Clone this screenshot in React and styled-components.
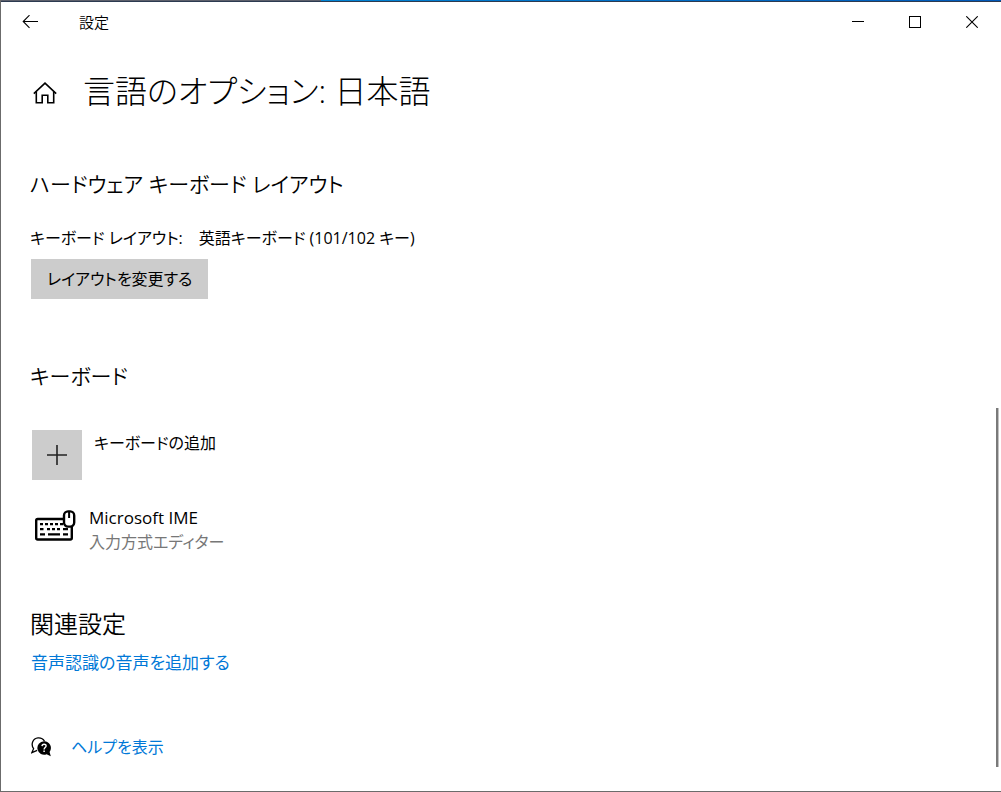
import React from 'react';
import styled, { createGlobalStyle } from 'styled-components';

const GlobalStyle = createGlobalStyle`
  *, *::before, *::after { box-sizing: border-box; }
  body {
    margin: 0;
    background: #fff;
    color: #000;
    font-family: "Open Sans", "Noto Sans CJK JP", sans-serif;
    font-size: 16px;
    line-height: 24px;
    font-feature-settings: "palt";
  }
  h1, h2, p { margin: 0; font-weight: 400; }
  button {
    border: 0;
    padding: 0;
    color: inherit;
    background: none;
    font: inherit;
    font-feature-settings: inherit;
  }
  svg { display: block; }
`;

const Frame = styled.div`
  display: flex;
  flex-direction: column;
  min-height: 100vh;
  border: solid #6b6b6b;
  border-width: 0 0 1px 1px;
`;

const Accent = styled.div`
  height: 2px;
  background: linear-gradient(90deg, #5c5f6b 0 32%, #0084d4 32%, #0058b8 100%);
  border-bottom: 1px solid #2c3a50;
`;

const TitleBar = styled.header`
  display: flex;
  align-items: center;
  height: 40px;
  padding-right: 1px;
`;

const BackButton = styled.button`
  display: grid;
  place-items: center;
  width: 58px;
  height: 40px;
`;

const AppName = styled.span`
  flex: 1;
  padding-left: 20px;
  font-size: 15px;
  font-weight: 350;
`;

const CaptionButton = styled.button`
  display: grid;
  place-items: center;
  width: 57px;
  height: 40px;
`;

const Body = styled.div`
  display: flex;
  flex: 1;
`;

const Content = styled.main`
  flex: 1;
  padding: 24px 29px 30px;
`;

const Track = styled.div`
  display: flex;
  align-items: flex-end;
  width: 5px;
  padding-bottom: 24px;
`;

const Thumb = styled.div`
  width: 3px;
  height: 49.5%;
  background: #7a7a7a;
  border-right: 1px solid #c2c2c2;
`;

const PageHeader = styled.div`
  display: flex;
  align-items: center;
  gap: 26px;
  height: 50px;
`;

const HomeButton = styled.button`
  padding: 4px 0 0 3px;
`;

const Title = styled.h1`
  font-size: 32px;
  line-height: 50px;
  font-weight: 300;
`;

const Section = styled.section`
  margin-top: ${(p) => p.$gap}px;
`;

const Heading = styled.h2`
  font-size: ${(p) => (p.$large ? 24 : 21)}px;
  line-height: 36px;
  font-weight: 350;
`;

const Detail = styled.p`
  display: flex;
  gap: 16px;
  margin-top: 24px;
`;

const FlatButton = styled.button`
  height: 40px;
  margin: 9px 0 0 1px;
  padding: 0 16px;
  background: #ccc;
`;

const AddButton = styled.button`
  display: flex;
  gap: 12px;
  margin: 36px 0 0 2px;
  text-align: left;
`;

const AddLabel = styled.span`
  padding-top: 1px;
`;

const Tile = styled.span`
  display: grid;
  place-items: center;
  width: 50px;
  height: 50px;
  background: #ccc;
`;

const Device = styled.div`
  display: flex;
  align-items: flex-start;
  gap: 13px;
  margin: 26px 0 0 5px;
`;

const DeviceIcon = styled.span`
  padding-top: 4px;
`;

const DeviceName = styled.p`
  font-size: 17px;
`;

const DeviceKind = styled.p`
  color: #777;
`;

const Link = styled.a`
  color: #0078d7;
  font-size: ${(p) => (p.$large ? 17 : 16)}px;
  text-decoration: none;
`;

const LinkRow = styled.div`
  display: flex;
  align-items: center;
  gap: 20px;
  padding-left: 1px;
  margin-top: ${(p) => p.$gap}px;
`;

const BackIcon = () => (
  <svg width="16" height="14" viewBox="0 0 16 14" fill="none" stroke="#000" strokeWidth="1.1">
    <path d="M16 6.5H1.5M7.5 .2L1.2 6.5L7.5 12.8" />
  </svg>
);

const MinimizeIcon = () => (
  <svg width="12" height="12" viewBox="0 0 12 12" stroke="#000">
    <path d="M0 5.5H12" />
  </svg>
);

const MaximizeIcon = () => (
  <svg width="12" height="12" viewBox="0 0 12 12" fill="none" stroke="#000">
    <rect x=".5" y=".5" width="11" height="11" />
  </svg>
);

const CloseIcon = () => (
  <svg width="12" height="12" viewBox="0 0 12 12" stroke="#000" strokeWidth="1.1">
    <path d="M.3 .3L11.7 11.7M11.7 .3L.3 11.7" />
  </svg>
);

const HomeIcon = () => (
  <svg width="24" height="22" viewBox="0 0 24 22" fill="none" stroke="#000" strokeWidth="1.6">
    <path d="M.8 11.6L12 1.2L23.2 11.6" />
    <path d="M3.3 9.6V20.7H9.2V13.2H14.8V20.7H20.7V9.6" />
  </svg>
);

const PlusIcon = () => (
  <svg width="20" height="20" viewBox="0 0 20 20" stroke="#222" strokeWidth="1.6">
    <path d="M0 10H20M10 0V20" />
  </svg>
);

const KeyboardIcon = () => (
  <svg width="41" height="31" viewBox="0 0 41 31" fill="none" stroke="#000">
    <rect x="1.2" y="9" width="35.6" height="20.5" rx="1.5" strokeWidth="2.4" />
    <path d="M5 14.2H28" strokeWidth="2.2" strokeDasharray="3 2" />
    <path d="M5 19.2H8.5M12 19.2H15M17 19.2H20M22 19.2H25M28 19.2H33" strokeWidth="2.2" />
    <path d="M5 24.3H10M13 24.3H25M28 24.3H33" strokeWidth="2.2" />
    <rect x="29" y="1.4" width="10.2" height="15.2" rx="4" fill="#fff" strokeWidth="2.4" />
    <path d="M34.1 2V8" strokeWidth="2" />
  </svg>
);

const HelpIcon = () => (
  <svg width="20" height="20" viewBox="0 0 20 20" fill="none">
    <path
      d="M6.2 13.4L.9 15.6L2.6 11.7C-.6 7.2 2 1.3 7 .9C10 .7 12.3 2 13.5 4.2"
      stroke="#000"
      strokeWidth="1.3"
    />
    <path
      d="M13 4.3A6.7 6.7 0 1 0 15.6 17.2L19.8 19.3L18.6 14.9A6.7 6.7 0 0 0 13 4.3Z"
      fill="#000"
    />
    <path d="M11 9.1C11.1 6.5 15.2 6.6 15.1 9C15 10.5 13.1 10.6 13.1 12.4" stroke="#fff" strokeWidth="1.4" />
    <path d="M13.1 13.5V15" stroke="#fff" strokeWidth="1.5" />
  </svg>
);

export default function App() {
  return (
    <>
      <GlobalStyle />
      <Frame lang="ja">
        <Accent />
        <TitleBar>
          <BackButton aria-label="戻る"><BackIcon /></BackButton>
          <AppName>設定</AppName>
          <CaptionButton aria-label="最小化"><MinimizeIcon /></CaptionButton>
          <CaptionButton aria-label="最大化"><MaximizeIcon /></CaptionButton>
          <CaptionButton aria-label="閉じる"><CloseIcon /></CaptionButton>
        </TitleBar>
        <Body>
          <Content>
            <PageHeader>
              <HomeButton aria-label="ホーム"><HomeIcon /></HomeButton>
              <Title>言語のオプション: 日本語</Title>
            </PageHeader>

            <Section $gap={50}>
              <Heading>ハードウェア キーボード レイアウト</Heading>
              <Detail>
                <span>キーボード レイアウト:</span>
                <span>英語キーボード (101/102 キー)</span>
              </Detail>
              <FlatButton>レイアウトを変更する</FlatButton>
            </Section>

            <Section $gap={59}>
              <Heading>キーボード</Heading>
              <AddButton>
                <Tile><PlusIcon /></Tile>
                <AddLabel>キーボードの追加</AddLabel>
              </AddButton>
              <Device>
                <DeviceIcon><KeyboardIcon /></DeviceIcon>
                <div>
                  <DeviceName>Microsoft IME</DeviceName>
                  <DeviceKind>入力方式エディター</DeviceKind>
                </div>
              </Device>
            </Section>

            <Section $gap={52}>
              <Heading $large>関連設定</Heading>
              <LinkRow $gap={9}>
                <Link $large href="#speech">音声認識の音声を追加する</Link>
              </LinkRow>
              <LinkRow $gap={60}>
                <HelpIcon />
                <Link href="#help">ヘルプを表示</Link>
              </LinkRow>
            </Section>
          </Content>
          <Track><Thumb /></Track>
        </Body>
      </Frame>
    </>
  );
}
